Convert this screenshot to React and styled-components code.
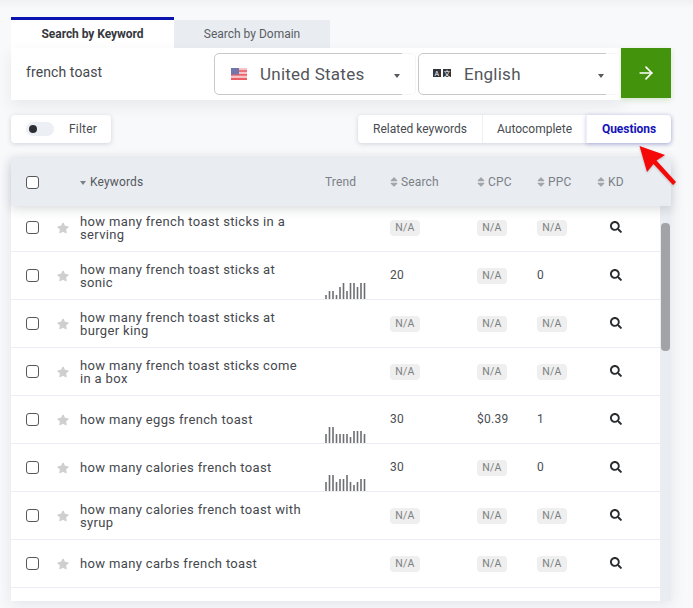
import React from "react";
import styled, { createGlobalStyle } from "styled-components";
import { FaSearch, FaStar, FaSort } from "react-icons/fa";
import { ArrowRight } from "lucide-react";

const Global = createGlobalStyle`
  html, body { margin: 0; padding: 0; background: #f8f9fb; }
  body { font-family: Roboto, "Liberation Sans", sans-serif; color: #3a3d42; }
`;

const Page = styled.div`
  position: relative;
  width: 693px;
  height: 608px;
  overflow: hidden;
  box-sizing: border-box;
  padding: 17px 22px 0 11px;
  background: linear-gradient(#f0f1f3 0, #f8f9fb 9px);
`;

const Tabs = styled.div`
  display: flex;
  align-items: flex-end;
  height: 31px;
`;

const Tab = styled.div`
  box-sizing: border-box;
  width: ${(p) => p.$w}px;
  height: ${(p) => (p.$active ? 31 : 28)}px;
  display: flex;
  align-items: center;
  justify-content: center;
  font-size: 12px;
  font-weight: ${(p) => (p.$active ? 700 : 400)};
  letter-spacing: ${(p) => (p.$active ? "-0.05px" : "0")};
  color: ${(p) => (p.$active ? "#35383d" : "#5a5e64")};
  background: ${(p) => (p.$active ? "#fff" : "#e9ecf1")};
  border-top: ${(p) => (p.$active ? "3px solid #0b14ae" : "0")};
`;

const SearchRow = styled.div`
  display: flex;
  align-items: flex-start;
`;

const SearchPanel = styled.div`
  display: flex;
  align-items: center;
  width: 610px;
  height: 52px;
  background: #fff;
  box-shadow: 0 6px 14px rgba(40, 50, 70, 0.08);
`;

const Keyword = styled.div`
  width: 203px;
  box-sizing: border-box;
  padding: 0 0 5px 15px;
  font-size: 14px;
  letter-spacing: 0.1px;
  color: #44474c;
`;

const Select = styled.div`
  position: relative;
  box-sizing: border-box;
  width: 202px;
  height: 42px;
  margin-right: ${(p) => (p.$gap ? 2 : 0)}px;
  border: 1px solid #c9c9c9;
  border-radius: 5px;
  display: flex;
  align-items: center;
  padding-left: ${(p) => p.$pad}px;
  font-size: 17px;
  letter-spacing: 0.25px;
  color: #53565b;
  &::after {
    content: "";
    position: absolute;
    top: -1px;
    bottom: -1px;
    right: -1px;
    width: 14px;
    background: rgba(255, 255, 255, 0.82);
  }
`;

const SelectLabel = styled.span`
  margin-left: ${(p) => p.$ml}px;
`;

const Caret = styled.span`
  position: absolute;
  z-index: 1;
  right: ${(p) => p.$right}px;
  top: 20px;
  border-left: 3.5px solid transparent;
  border-right: 3.5px solid transparent;
  border-top: 4px solid #55585d;
`;

const Go = styled.button`
  width: 50px;
  height: 50px;
  margin-left: 0;
  border: 0;
  padding: 0;
  background: #43940c;
  color: #fff;
  display: flex;
  align-items: center;
  justify-content: center;
  box-shadow: 0 2px 6px rgba(67, 148, 12, 0.2);
`;

const Toolbar = styled.div`
  display: flex;
  justify-content: space-between;
  margin-top: 15px;
`;

const FilterBox = styled.div`
  display: flex;
  align-items: center;
  box-sizing: border-box;
  width: 100px;
  height: 28px;
  padding-left: 15px;
  border-radius: 4px;
  background: #fff;
  box-shadow: 0 1px 5px rgba(30, 40, 60, 0.18);
  font-size: 12px;
  letter-spacing: 0.2px;
  color: #4a4d52;
`;

const Toggle = styled.span`
  box-sizing: border-box;
  width: 28px;
  height: 14px;
  margin-right: 15px;
  padding: 3px;
  border-radius: 7px;
  background: #eceff3;
  display: flex;
`;

const Knob = styled.span`
  width: 8px;
  height: 8px;
  border-radius: 50%;
  background: #2c2f34;
`;

const Segments = styled.div`
  display: flex;
  height: 28px;
  border-radius: 4px;
  background: #fff;
  box-shadow: 0 1px 5px rgba(30, 40, 60, 0.18);
`;

const Segment = styled.div`
  box-sizing: border-box;
  width: ${(p) => p.$w}px;
  display: flex;
  align-items: center;
  justify-content: center;
  font-size: 12px;
  letter-spacing: ${(p) => (p.$active ? "-0.05px" : "0")};
  border-left: ${(p) => (p.$first ? "0" : "1px solid #eceff4")};
  border-radius: ${(p) => (p.$active ? "0 4px 4px 0" : "0")};
  color: ${(p) => (p.$active ? "#1414b8" : "#484b50")};
  font-weight: ${(p) => (p.$active ? 700 : 400)};
  box-shadow: ${(p) => (p.$active ? "0 1px 4px rgba(30, 30, 200, 0.25)" : "none")};
`;

const Table = styled.div`
  margin-top: 15px;
  width: 660px;
  background: #e9ecf1;
  box-shadow: 0 3px 14px rgba(40, 50, 70, 0.1);
`;

const columns = "46px 23px 245px 65px 87px 60px 60px 1fr";

const HeadRow = styled.div`
  position: relative;
  z-index: 2;
  display: grid;
  grid-template-columns: ${columns};
  align-items: center;
  height: 48px;
  background: #e9ecf1;
  box-shadow: 0 3px 10px rgba(30, 35, 50, 0.16);
  font-size: 12px;
  letter-spacing: 0.15px;
  color: #7b7f86;
`;

const HeadKeyword = styled.div`
  grid-column: 3;
  display: flex;
  align-items: center;
  gap: 4px;
  color: #55585e;
`;

const HeadCaret = styled.span`
  margin-top: 2px;
  border-left: 3.5px solid transparent;
  border-right: 3.5px solid transparent;
  border-top: 4px solid #7b7f86;
`;

const HeadCell = styled.div`
  display: flex;
  align-items: center;
  gap: 3px;
  color: #7b7f86;
  svg { color: #a2a5aa; width: 8px; height: 12px; }
`;

const BodyWrap = styled.div`
  display: flex;
  height: 397px;
  margin-top: -2px;
  overflow: hidden;
`;

const Rows = styled.div`
  width: 649px;
  background: #fff;
`;

const Row = styled.div`
  display: grid;
  grid-template-columns: ${columns};
  align-items: center;
  box-sizing: border-box;
  height: 48px;
  border-bottom: 1px solid #eceef3;
  font-size: 13px;
  letter-spacing: 0.35px;
  color: #45484d;
`;

const CheckCell = styled.div`
  padding-left: 15px;
  display: flex;
`;

const Check = styled.input.attrs({ type: "checkbox" })`
  appearance: none;
  box-sizing: border-box;
  width: 13px;
  height: 13px;
  margin: 0;
  background: #fff;
  border: 1px solid #55585c;
  border-radius: 3px;
`;

const StarCell = styled.div`
  display: flex;
  margin-left: -0.5px;
  color: #cfcfcf;
  svg { width: 12px; height: 12px; }
`;

const Phrase = styled.div`
  width: 230px;
  line-height: 13px;
`;

const TrendCell = styled.div`
  align-self: end;
  display: flex;
  height: 47px;
  align-items: flex-end;
`;

const Bars = styled.svg`
  display: block;
  width: 41px;
  height: 16px;
`;

const Value = styled.div`
  font-size: 12px;
  letter-spacing: 0.3px;
  color: #4a4d52;
  margin-top: -2px;
`;

const NA = styled.span`
  display: inline-flex;
  align-items: center;
  justify-content: center;
  width: 30px;
  height: 16px;
  border-radius: 4px;
  background: #efefef;
  color: #7d7f82;
  font-size: 10.5px;
  letter-spacing: 0.2px;
`;

const Lookup = styled.div`
  padding-left: 13px;
  display: flex;
  margin-top: -2px;
  color: #2a2c30;
  svg { width: 12px; height: 12px; }
`;

const Track = styled.div`
  flex: 1;
  background: #e9ecf1;
  padding: 19px 1px 0;
`;

const Thumb = styled.div`
  height: 128px;
  border-radius: 4px;
  background: #a2a3a6;
`;

const ArrowMark = styled.svg`
  position: absolute;
  z-index: 3;
  left: 635px;
  top: 142px;
  width: 48px;
  height: 48px;
  filter: drop-shadow(0 1px 1px rgba(0, 0, 0, 0.2));
`;

const Flag = () => (
  <svg width="16" height="12" viewBox="0 0 16 12" style={{ opacity: 0.85 }}>
    <rect width="16" height="12" fill="#f6b9bd" />
    <rect y="2.2" width="16" height="1.6" fill="#e8434c" />
    <rect y="6" width="16" height="1.6" fill="#e8434c" />
    <rect y="10" width="16" height="2" fill="#e8434c" />
    <rect width="8" height="6.5" fill="#5a5f9d" />
  </svg>
);

const LangIcon = () => (
  <svg width="18" height="8" viewBox="0 0 18 8" style={{ marginTop: -3 }}>
    <rect width="8" height="8" fill="#33353a" />
    <rect x="10" width="8" height="8" fill="#33353a" />
    <text x="4" y="6.6" fontSize="7" fontFamily="Roboto" fill="#fff" textAnchor="middle">A</text>
    <text x="14" y="6.6" fontSize="6.5" fontFamily="Noto Sans CJK SC" fill="#fff" textAnchor="middle">文</text>
  </svg>
);

const Trend = ({ data }) => (
  <Bars viewBox="0 0 41 16">
    {data.map((h, i) => (
      <rect key={i} x={i * 3.5 + 0.2} y={16 - h} width="1.6" height={h} fill="#6d6f73" />
    ))}
  </Bars>
);

const rows = [
  { t: "how many french toast sticks in a serving" },
  { t: "how many french toast sticks at sonic", s: "20", p: "0", b: [4, 8, 8, 4, 12, 16, 8, 16, 16, 12, 16, 16] },
  { t: "how many french toast sticks at burger king" },
  { t: "how many french toast sticks come in a box" },
  { t: "how many eggs french toast", s: "30", c: "$0.39", p: "1", b: [9, 16, 16, 9, 9, 9, 9, 6, 12, 12, 12, 9] },
  { t: "how many calories french toast", s: "30", p: "0", b: [9, 16, 16, 9, 12, 12, 16, 9, 6, 9, 12, 12] },
  { t: "how many calories french toast with syrup" },
  { t: "how many carbs french toast" },
];

const Cell = ({ v }) => (v ? <Value>{v}</Value> : <div><NA>N/A</NA></div>);

export default function App() {
  return (
    <Page>
      <Global />
      <Tabs>
        <Tab $w={163} $active>Search by Keyword</Tab>
        <Tab $w={156}>Search by Domain</Tab>
      </Tabs>
      <SearchRow>
        <SearchPanel>
          <Keyword>french toast</Keyword>
          <Select $gap $pad={16}>
            <Flag />
            <SelectLabel $ml={13}>United States</SelectLabel>
            <Caret $right={15} />
          </Select>
          <Select $pad={14}>
            <LangIcon />
            <SelectLabel $ml={13}>English</SelectLabel>
            <Caret $right={15} />
          </Select>
        </SearchPanel>
        <Go aria-label="Search"><ArrowRight size={20} strokeWidth={2} /></Go>
      </SearchRow>
      <Toolbar>
        <FilterBox>
          <Toggle><Knob /></Toggle>
          Filter
        </FilterBox>
        <Segments>
          <Segment $w={124} $first>Related keywords</Segment>
          <Segment $w={104}>Autocomplete</Segment>
          <Segment $w={85} $active>Questions</Segment>
        </Segments>
      </Toolbar>
      <Table>
        <HeadRow>
          <CheckCell><Check /></CheckCell>
          <HeadKeyword><HeadCaret />Keywords</HeadKeyword>
          <HeadCell>Trend</HeadCell>
          <HeadCell><FaSort />Search</HeadCell>
          <HeadCell><FaSort />CPC</HeadCell>
          <HeadCell><FaSort />PPC</HeadCell>
          <HeadCell><FaSort />KD</HeadCell>
        </HeadRow>
        <BodyWrap>
          <Rows>
            {rows.map((r) => (
              <Row key={r.t}>
                <CheckCell><Check /></CheckCell>
                <StarCell><FaStar /></StarCell>
                <Phrase>{r.t}</Phrase>
                <TrendCell>{r.b && <Trend data={r.b} />}</TrendCell>
                <Cell v={r.s} />
                <Cell v={r.c} />
                <Cell v={r.p} />
                <Lookup><FaSearch /></Lookup>
              </Row>
            ))}
          </Rows>
          <Track><Thumb /></Track>
        </BodyWrap>
      </Table>
      <ArrowMark viewBox="0 0 48 48">
        <path d="M4.5 4 L30 13 L21.5 18.5 L41 40 L38 43 L18.5 22 L12 30 Z" fill="#f50808" />
      </ArrowMark>
    </Page>
  );
}
